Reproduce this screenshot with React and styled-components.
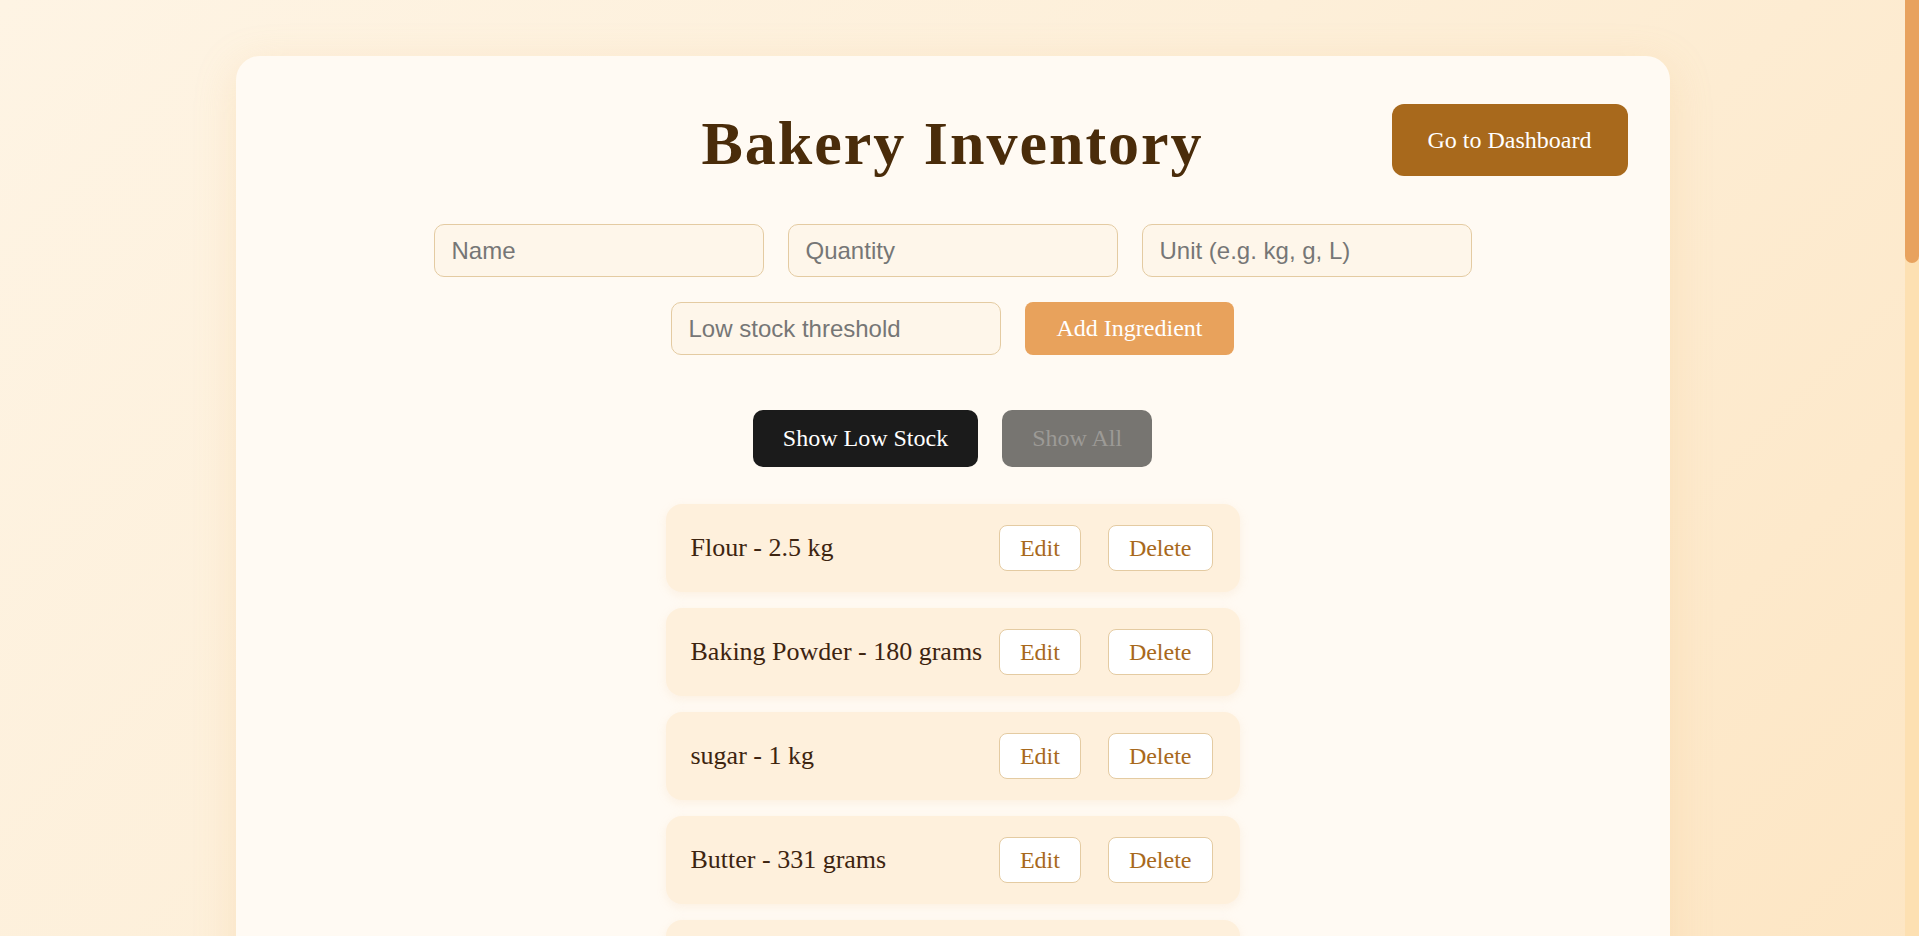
import React, { useState } from 'react';
import styled, { createGlobalStyle } from 'styled-components';

const GlobalStyle = createGlobalStyle`
  html, body {
    margin: 0;
    padding: 0;
  }
  body {
    background: linear-gradient(135deg, #fef4e4 0%, #fdefd9 45%, #fde6c4 100%);
    background-attachment: fixed;
    font-family: "Liberation Serif", "Times New Roman", serif;
  }
  ::-webkit-scrollbar {
    width: 14px;
  }
  ::-webkit-scrollbar-track {
    background: #fde0b2;
  }
  ::-webkit-scrollbar-thumb {
    background: #e8a25e;
    border-radius: 7px;
  }
`;

/* the page's scroll bar, painted over the right edge */
const ScrollTrack = styled.div`
  position: fixed;
  top: 0;
  right: 0;
  width: 14px;
  height: 100vh;
  background: #fde0b2;
`;

const ScrollThumb = styled.div`
  width: 14px;
  height: 263px;
  border-radius: 0 0 7px 7px;
  background: #e8a25e;
`;

const Page = styled.div`
  padding: 56px 14px 56px 0;
`;

const Card = styled.div`
  width: 1434px;
  margin: 0 auto;
  box-sizing: border-box;
  padding: 48px 42px 48px;
  background: #fffaf3;
  border-radius: 24px;
  box-shadow: 0 10px 40px rgba(240, 190, 120, 0.25);
`;

const Header = styled.div`
  display: grid;
  grid-template-columns: 1fr auto 1fr;
  align-items: center;
`;

const Title = styled.h1`
  grid-column: 2;
  margin: 0;
  font-family: "Liberation Serif", "Times New Roman", serif;
  font-size: 62px;
  font-weight: bold;
  letter-spacing: 2px;
  color: #4a2c0a;
  position: relative;
  top: 3px;
`;

const DashButton = styled.button`
  grid-column: 3;
  justify-self: end;
  height: 72px;
  padding: 0 36px;
  border: none;
  border-radius: 12px;
  background: #a8691c;
  color: #fff;
  font-family: "Liberation Serif", "Times New Roman", serif;
  font-size: 24px;
  cursor: pointer;
`;

const Form = styled.div`
  max-width: 1100px;
  margin: 48px auto 0;
  display: flex;
  flex-wrap: wrap;
  justify-content: center;
  gap: 25px 24px;
`;

const Input = styled.input`
  width: 330px;
  height: 53px;
  box-sizing: border-box;
  padding: 0 17px;
  border: 1px solid #e4cba2;
  border-radius: 10px;
  background: #fef6ea;
  font-family: "Liberation Sans", Arial, sans-serif;
  font-size: 24px;
  color: #3d2410;
  outline: none;
  &::placeholder {
    color: #767676;
  }
`;

const AddButton = styled.button`
  height: 53px;
  padding: 0 32px;
  border: none;
  border-radius: 8px;
  background: #e8a25c;
  color: #fff;
  font-family: "Liberation Serif", "Times New Roman", serif;
  font-size: 24px;
  cursor: pointer;
`;

const Filters = styled.div`
  display: flex;
  justify-content: center;
  gap: 24px;
  margin-top: 55px;
`;

const FilterButton = styled.button`
  height: 57px;
  padding: 0 30px;
  border: none;
  border-radius: 10px;
  background: ${p => (p.$active ? '#1b1b1b' : '#777571')};
  color: ${p => (p.$active ? '#ffffff' : '#9c9a96')};
  font-family: "Liberation Serif", "Times New Roman", serif;
  font-size: 24px;
  cursor: pointer;
`;

const List = styled.ul`
  list-style: none;
  margin: 37px 0 0;
  padding: 0;
  display: flex;
  flex-direction: column;
  align-items: center;
  gap: 16px;
`;

const Item = styled.li`
  width: 574px;
  box-sizing: border-box;
  height: 88px;
  padding: 0 27px 0 25px;
  display: flex;
  align-items: center;
  justify-content: space-between;
  background: #fef0dc;
  border-radius: 16px;
  box-shadow: 0 3px 10px rgba(240, 200, 150, 0.18);
`;

const ItemText = styled.span`
  font-family: "Liberation Serif", "Times New Roman", serif;
  font-size: 26px;
  color: #3d2410;
`;

const Actions = styled.div`
  display: flex;
  gap: 27px;
`;

const SmallButton = styled.button`
  height: 46px;
  padding: 0 20px;
  background: #ffffff;
  border: 1px solid #e4cba2;
  border-radius: 8px;
  color: #a8691c;
  font-family: "Liberation Serif", "Times New Roman", serif;
  font-size: 24px;
  cursor: pointer;
`;

const initialItems = [
  'Flour - 2.5 kg',
  'Baking Powder - 180 grams',
  'sugar - 1 kg',
  'Butter - 331 grams',
  'Eggs - 24 pcs',
  'Milk - 2 L',
  'Yeast - 50 grams',
  'Salt - 500 grams',
  'Vanilla Extract - 100 ml',
  'Cocoa Powder - 400 grams',
  'Brown Sugar - 750 grams',
  'Cream Cheese - 2 kg',
  'Chocolate Chips - 600 g',
  'Heavy Cream - 1 L',
  'Cinnamon - 80 grams',
  'Honey - 500 ml',
  'Almonds - 300 grams',
  'Walnuts - 250 grams',
  'Raisins - 400 grams',
  'Icing Sugar - 1.2 kg',
  'Oats - 900 grams',
  'Lemon Zest - 60 grams',
  'Baking Soda - 200 grams',
  'Cornstarch - 350 grams',
  'Strawberry Jam - 1 kg',
  'Wheat Flour - 3 kg',
];

export default function App() {
  const [items] = useState(initialItems);
  const [lowOnly, setLowOnly] = useState(false);

  return (
    <Page>
      <GlobalStyle />
      <Card>
        <Header>
          <Title>Bakery Inventory</Title>
          <DashButton>Go to Dashboard</DashButton>
        </Header>

        <Form>
          <Input placeholder="Name" />
          <Input placeholder="Quantity" />
          <Input placeholder="Unit (e.g. kg, g, L)" />
          <Input placeholder="Low stock threshold" />
          <AddButton>Add Ingredient</AddButton>
        </Form>

        <Filters>
          <FilterButton $active onClick={() => setLowOnly(true)}>Show Low Stock</FilterButton>
          <FilterButton onClick={() => setLowOnly(false)}>Show All</FilterButton>
        </Filters>

        <List>
          {items.map(name => (
            <Item key={name}>
              <ItemText>{name}</ItemText>
              <Actions>
                <SmallButton>Edit</SmallButton>
                <SmallButton>Delete</SmallButton>
              </Actions>
            </Item>
          ))}
        </List>
      </Card>
      <ScrollTrack>
        <ScrollThumb />
      </ScrollTrack>
    </Page>
  );
}
